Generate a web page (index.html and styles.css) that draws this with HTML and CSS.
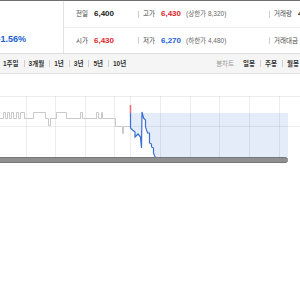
FILE: index.html
```html
<!DOCTYPE html>
<html lang="ko">
<head>
<meta charset="utf-8">
<link rel="stylesheet" href="styles.css">
</head>
<body>
<div class="page">
  <div class="topline"></div>
  <div class="info">
    <div class="rate"><span class="pct">-1.56%</span></div>
    <div class="rows">
      <div class="row">
        <div class="cell c1"><span class="lbl">전일</span><b class="num">6,400</b></div>
        <div class="cell c2"><i class="sep"></i><span class="lbl">고가</span><b class="num up">6,430</b><span class="sub">(상한가 8,320)</span></div>
        <div class="cell c3"><i class="sep"></i><span class="lbl">거래량</span><b class="num">4,512,308</b></div>
      </div>
      <div class="row">
        <div class="cell c1"><span class="lbl">시가</span><b class="num up">6,430</b></div>
        <div class="cell c2"><i class="sep"></i><span class="lbl">저가</span><b class="num down">6,270</b><span class="sub">(하한가 4,480)</span></div>
        <div class="cell c3"><i class="sep"></i><span class="lbl">거래대금</span><b class="num">28,940</b></div>
      </div>
    </div>
  </div>
  <div class="tabs">
    <div class="group">
      <span>1주일</span><i class="sep"></i><span>3개월</span><i class="sep"></i><span>1년</span><i class="sep"></i><span>3년</span><i class="sep"></i><span>5년</span><i class="sep"></i><span>10년</span>
    </div>
    <div class="group">
      <span class="muted">봉차트</span><span class="gap"></span><span>일봉</span><i class="sep"></i><span>주봉</span><i class="sep"></i><span>월봉</span>
    </div>
  </div>
  <div class="chart">
    <svg width="300" height="83" viewBox="0 0 300 83">
      <path d="M130.5 39 V54 L132.5 56 L135 58 V63 L138 60 L140.5 63 L141.5 74 L142 38 L143.5 44 L145.5 46 V53 L147.5 59 H149.5 V69 L151.5 70 V73 L153.5 74 V79 L155.5 84 H288 V39 Z" fill="#e4ecfa"/>
      <g stroke="rgba(0,0,0,0.07)" stroke-width="1" fill="none">
        <path d="M0 22.5 H300 M0 52.5 H300"/>
        <path d="M26.5 22 V83 M55.5 22 V83 M85.5 22 V83 M114.5 22 V83 M130.5 22 V83 M160.5 22 V83 M190.5 22 V83 M219.5 22 V83 M249.5 22 V83 M279.5 22 V83"/>
      </g>
      <path d="M0 44.5 H3.5 V38.5 H5.5 V44.5 H7.5 V38.5 H9.5 V44.5 H11.5 V38.5 H13.5 V44.5 H16.5 V38.5 H18.5 V44.5 H20.5 V38.5 H24.5 V44.5 H33.5 V38.5 H45.5 V44.5 H48.5 V51.5 H50.5 V44.5 H56.5 V38.5 H66.5 V44.5 H80.5 V38.5 H82.5 V44.5 H96.5 V38.5 H98.5 V44.5 H101.5 V38.5 H102.5 V44.5 H115.5 V52.5 H122.5 V59.5 H123.5 V52.5 H130.5" stroke="#c9c9c9" stroke-width="1" fill="none"/>
      <path d="M130.5 39 V54 L132.5 56 L135 58 V63 L138 60 L140.5 63 L141.5 74 L142 38 L143.5 44 L145.5 46 V53 L147.5 59 H149.5 V69 L151.5 70 V73 L153.5 74 V79 L155.5 84" stroke="#3a6fd2" stroke-width="1.2" fill="none"/>
      <path d="M130.5 31 V39" stroke="#ec6b6f" stroke-width="1.5"/>
    </svg>
  </div>
  <div class="scroll"></div>
</div>
</body>
</html>
```
FILE: styles.css
```css
html, body {
  margin: 0;
  background: #fff;
}
.page {
  width: 300px;
  overflow: hidden;
  font-family: "Liberation Sans", "Noto Sans CJK KR", sans-serif;
}
.topline {
  height: 1px;
  background: #707070;
}
.info {
  display: flex;
  height: 52px;
  border-bottom: 1px solid #dedede;
}
.rate {
  width: 64px;
  box-sizing: border-box;
  border-right: 1px solid #e3e3e3;
  display: flex;
  align-items: flex-end;
  justify-content: flex-end;
  padding: 0 37px 9px 0;
}
.pct {
  font-size: 9px;
  line-height: 10px;
  font-weight: bold;
  color: #1b5fd5;
  white-space: nowrap;
}
.rows {
  flex: 1;
  display: flex;
  flex-direction: column;
  white-space: nowrap;
}
.row {
  display: flex;
  align-items: center;
  height: 26px;
}
.row + .row {
  height: 25px;
  border-top: 1px solid #ececec;
}
.cell {
  display: flex;
  align-items: center;
  flex: none;
}
.c1 {
  width: 74px;
  padding-left: 12px;
  box-sizing: border-box;
}
.c2 {
  width: 131px;
}
.lbl {
  font-size: 6.5px;
  line-height: 10px;
  color: #444;
  margin-right: 6px;
}
.num {
  font-size: 8px;
  line-height: 10px;
  font-weight: bold;
  color: #222;
}
.up {
  color: #e3242b;
}
.down {
  color: #1b5fd5;
}
.sub {
  font-size: 6.5px;
  line-height: 10px;
  color: #666;
  margin-left: 5px;
}
.sep {
  display: block;
  width: 1px;
  height: 7px;
  background: #cfcfcf;
  margin-right: 4px;
}
.tabs {
  display: flex;
  justify-content: space-between;
  align-items: center;
  height: 19px;
  padding: 0 1px 0 3px;
  background: #f5f5f5;
  border-bottom: 1px solid #e2e2e2;
  font-size: 6.5px;
  line-height: 10px;
  font-weight: bold;
  color: #333;
  white-space: nowrap;
}
.group {
  display: flex;
  align-items: center;
}
.tabs .sep {
  margin: 0 4px 0 5px;
}
.muted {
  color: #999;
  font-weight: normal;
}
.gap {
  width: 9px;
}
.chart {
  height: 83px;
}
.chart svg {
  display: block;
}
.scroll {
  width: 288px;
  height: 4px;
  background: #8f8f8f;
  border-top: 1px solid #777;
  border-bottom: 1px solid #777;
  border-radius: 0 3px 3px 0;
}
```
